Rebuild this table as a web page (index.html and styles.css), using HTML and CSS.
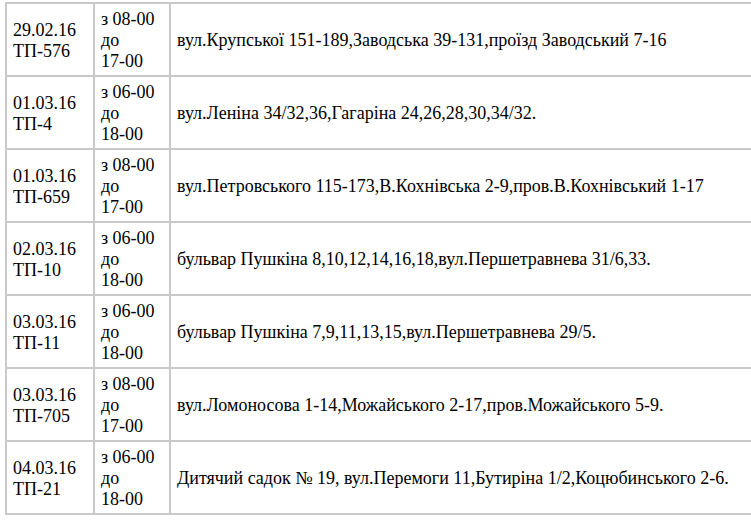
FILE: index.html
```html
<!DOCTYPE html>
<html lang="uk">
<head>
<meta charset="utf-8">
<title>Графік відключень</title>
<link rel="stylesheet" href="styles.css">
</head>
<body>
<div class="wrap">
<table class="schedule">
  <tr>
    <td class="c-date">29.02.16<br>ТП-576</td>
    <td class="c-time">з 08-00<br>до<br>17-00</td>
    <td class="c-addr">вул.Крупської 151-189,Заводська 39-131,проїзд Заводський 7-16</td>
  </tr>
  <tr>
    <td class="c-date">01.03.16<br>ТП-4</td>
    <td class="c-time">з 06-00<br>до<br>18-00</td>
    <td class="c-addr">вул.Леніна 34/32,36,Гагаріна 24,26,28,30,34/32.</td>
  </tr>
  <tr>
    <td class="c-date">01.03.16<br>ТП-659</td>
    <td class="c-time">з 08-00<br>до<br>17-00</td>
    <td class="c-addr">вул.Петровського 115-173,В.Кохнівська 2-9,пров.В.Кохнівський 1-17</td>
  </tr>
  <tr>
    <td class="c-date">02.03.16<br>ТП-10</td>
    <td class="c-time">з 06-00<br>до<br>18-00</td>
    <td class="c-addr">бульвар Пушкіна 8,10,12,14,16,18,вул.Першетравнева 31/6,33.</td>
  </tr>
  <tr>
    <td class="c-date">03.03.16<br>ТП-11</td>
    <td class="c-time">з 06-00<br>до<br>18-00</td>
    <td class="c-addr">бульвар Пушкіна 7,9,11,13,15,вул.Першетравнева 29/5.</td>
  </tr>
  <tr>
    <td class="c-date">03.03.16<br>ТП-705</td>
    <td class="c-time">з 08-00<br>до<br>17-00</td>
    <td class="c-addr">вул.Ломоносова 1-14,Можайського 2-17,пров.Можайського 5-9.</td>
  </tr>
  <tr>
    <td class="c-date">04.03.16<br>ТП-21</td>
    <td class="c-time">з 06-00<br>до<br>18-00</td>
    <td class="c-addr">Дитячий садок № 19, вул.Перемоги 11,Бутиріна 1/2,Коцюбинського 2-6.</td>
  </tr>
</table>
</div>
</body>
</html>
```

FILE: styles.css
```css
html, body {
  margin: 0;
  padding: 0;
  background: #ffffff;
  overflow: hidden;
}

.wrap {
  padding: 2px 0 0 5px;
  width: 800px;
}

.schedule {
  border-collapse: collapse;
  width: 790px;
  table-layout: fixed;
  font-size: 18px;
  line-height: 21px;
  color: #000000;
}

.schedule td {
  font-family: "Liberation Serif", "Times New Roman", serif;
  border: 2px solid #c9c9c9;
  box-sizing: border-box;
  padding: 5px 6px 3px;
  vertical-align: middle;
  white-space: nowrap;
}

.c-date { width: 88px; }
.c-time { width: 76px; }
.c-addr { width: auto; padding-left: 7px; }
```
